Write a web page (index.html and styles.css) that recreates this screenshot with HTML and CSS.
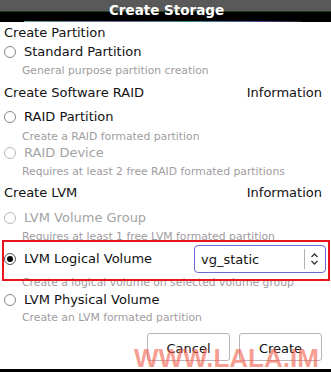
FILE: index.html
```html
<!DOCTYPE html>
<html lang="en">
<head>
	<meta charset="UTF-8">
	<title>Create Storage</title>
	<link rel="stylesheet" href="styles.css">
</head>
<body>
	<div id="dialog">
		<div class="titlebar">
			<div class="title">Create Storage</div>
			<div class="shine"></div>
		</div>
		<div class="content">
			<div class="head first"><span>Create Partition</span></div>
			<div class="opt first-opt"><span class="radio"></span><span class="label">Standard Partition</span></div>
			<div class="desc">General purpose partition creation</div>

			<div class="head"><span>Create Software RAID</span><span>Information</span></div>
			<div class="opt"><span class="radio"></span><span class="label">RAID Partition</span></div>
			<div class="desc tight">Create a RAID formated partition</div>
			<div class="opt off flush"><span class="radio"></span><span class="label">RAID Device</span></div>
			<div class="desc">Requires at least 2 free RAID formated partitions</div>

			<div class="head lvm"><span>Create LVM</span><span>Information</span></div>
			<div class="opt off wide"><span class="radio"></span><span class="label">LVM Volume Group</span></div>
			<div class="desc">Requires at least 1 free LVM formated partition</div>
			<div class="opt sel"><span class="radio on"></span><span class="label">LVM Logical Volume</span>
				<div class="select">
					<span class="val">vg_static</span>
					<span class="sep"></span>
					<svg class="arrows" width="9" height="14" viewBox="0 0 9 14"><path d="M1.5 5 L4.5 2 L7.5 5 M1.5 9 L4.5 12 L7.5 9" fill="none" stroke="#333" stroke-width="1.3"/></svg>
				</div>
			</div>
			<div class="desc after-sel">Create a logical volume on selected volume group</div>
			<div class="opt flush1"><span class="radio"></span><span class="label">LVM Physical Volume</span></div>
			<div class="desc tight2">Create an LVM formated partition</div>

			<div class="buttons">
				<span class="btn">Cancel</span>
				<span class="btn">Create</span>
			</div>
		</div>
		<div class="mark-box"></div>
		<div class="watermark">WWW.LALA.IM</div>
		<div class="bottom-bar"></div>
	</div>
</body>
</html>
```

FILE: styles.css
```css
*{
	margin: 0;
	padding: 0;
	box-sizing: border-box;
}
body{
	width: 331px;
	height: 372px;
	overflow: hidden;
	background: #fff;
	font-family: "DejaVu Sans", "Liberation Sans", sans-serif;
	font-size: 13px;
	color: #111;
}
#dialog{
	position: relative;
	width: 331px;
	height: 372px;
}
.titlebar{
	height: 22px;
	background: linear-gradient(to bottom, #595959 0, #595959 11px, #1d3a1d 11px, #1d3a1d 12px, #000 12px, #000 21px);
	position: relative;
}
.title{
	text-align: center;
	color: #fff;
	font-weight: bold;
	font-size: 13.5px;
	line-height: 20px;
	padding-left: 2px;
}
.shine{
	position: absolute;
	left: 24px;
	right: 30px;
	bottom: 0;
	height: 1px;
	background: linear-gradient(to right, #6a9a9a, #6a6a9a 35%, #3a8a8a 60%, #4a4a9a 85%, #222);
}
.content{
	padding: 3px 0 0 0;
}
.head{
	display: flex;
	justify-content: space-between;
	line-height: 16px;
	height: 16px;
	padding: 0 9px 0 4px;
	margin-top: 6px;
}
.head.first{
	margin-top: 0;
}
.head.lvm{
	margin-top: 5px;
}
.opt{
	display: flex;
	align-items: center;
	height: 16px;
	margin-top: 8px;
}
.opt.first-opt{
	margin-top: 3px;
}
.opt.flush{
	margin-top: 0;
}
.opt.wide{
	margin-top: 9px;
}
.opt.flush1{
	margin-top: 1px;
}
.radio{
	width: 12px;
	height: 12px;
	margin-left: 4px;
	border: 1px solid #8a8488;
	border-radius: 50%;
	position: relative;
	flex: none;
}
.radio.on{
	border-color: #555;
}
.radio.on::after{
	content: "";
	position: absolute;
	left: 2px;
	top: 2px;
	width: 6px;
	height: 6px;
	border-radius: 50%;
	background: #000;
}
.label{
	margin-left: 8px;
	line-height: 16px;
}
.opt.off .label{
	color: #a3a3a3;
}
.opt.off .radio{
	border-color: #b8b8b8;
}
.desc{
	margin-top: 3px;
	margin-left: 22px;
	height: 16px;
	line-height: 16px;
	font-size: 10.8px;
	color: #a09ca0;
	white-space: nowrap;
}
.desc.tight{
	margin-top: 4px;
}
.desc.after-sel{
	margin-top: 2px;
}
.desc.tight2{
	margin-top: 2px;
}
.opt.sel{
	height: 28px;
	margin-top: 0;
}
.select{
	margin-left: auto;
	margin-right: 5px;
	width: 132px;
	height: 28px;
	border: 1.5px solid #6b6bd6;
	border-radius: 4px;
	display: flex;
	align-items: center;
	padding-left: 6px;
}
.select .val{
	flex: 1;
}
.select .sep{
	width: 1px;
	height: 20px;
	background: #b0b0b0;
	margin-right: 5px;
}
.select .arrows{
	margin-right: 6px;
}
.buttons{
	display: flex;
	justify-content: flex-end;
	gap: 9px;
	padding-right: 9px;
	margin-top: 7px;
}
.btn{
	width: 83px;
	height: 28px;
	border: 1px solid #bab4ba;
	border-radius: 3px;
	text-align: center;
	line-height: 26px;
	padding-top: 2px;
}
.mark-box{
	position: absolute;
	left: 2px;
	top: 240px;
	width: 328px;
	height: 41px;
	border: 2px solid #e8141e;
}
.watermark{
	position: absolute;
	left: 134px;
	top: 344px;
	font-family: "Liberation Sans", sans-serif;
	font-weight: bold;
	font-size: 26px;
	line-height: 28px;
	color: rgba(242, 92, 72, 0.6);
}
.bottom-bar{
	position: absolute;
	left: 0;
	right: 0;
	bottom: 0;
	height: 3px;
	background: #000;
}
```
